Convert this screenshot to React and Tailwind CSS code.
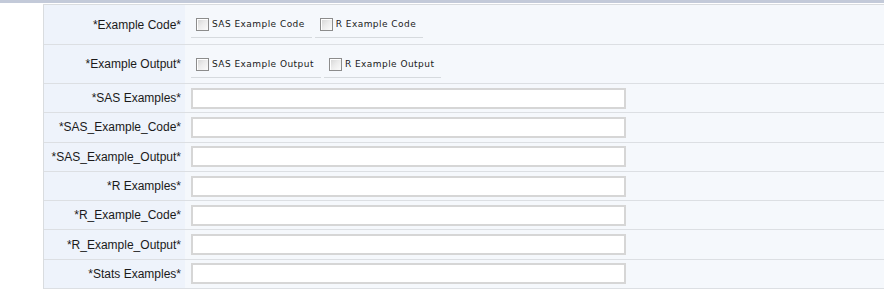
import React from 'react';

const checkRows = [
    { label: '*Example Code*', items: ['SAS Example Code', 'R Example Code'], h: 'h-[40px]' },
    { label: '*Example Output*', items: ['SAS Example Output', 'R Example Output'], h: 'h-[39px]' },
];

const textRows = [
    '*SAS Examples*',
    '*SAS_Example_Code*',
    '*SAS_Example_Output*',
    '*R Examples*',
    '*R_Example_Code*',
    '*R_Example_Output*',
    '*Stats Examples*',
];

function Box() {
    return (
        <span className="w-[13px] h-[13px] border border-[#8c8c8c] bg-gradient-to-br from-[#d4d4d4] via-[#ececec] to-[#fbfbfb] shrink-0 shadow-[inset_1px_1px_0_#fff]"></span>
    );
}

export default function App() {
    return (
        <div className="w-[884px] h-[289px] bg-white overflow-hidden font-['Liberation_Sans',Arial,sans-serif]">
            <div className="h-[3px] bg-[#c3cad9]"></div>
            <div className="h-px bg-white"></div>
            <div className="ml-[43px] border-l border-[#d9dcdf] border-t border-t-[#d9dcdf]">
                {checkRows.map(row => (
                    <div key={row.label} className={`flex ${row.h} border-b border-[#dcdfe3]`}>
                        <div className="w-[141px] shrink-0 bg-[#eef3fb] flex items-center justify-end pr-[4px] text-[12px] text-[#1a1a1a]">
                            {row.label}
                        </div>
                        <div className="flex-1 bg-[#f5f8fc] flex items-start pl-[6px] pt-[6px] gap-[3px]">
                            {row.items.map(item => (
                                <div key={item} className="flex items-center h-[27px] pl-[5px] pr-[7px] pt-[1px] border-b border-[#d6dade]">
                                    <Box />
                                    <span className="ml-[3px] text-[9px] tracking-[0.45px] text-[#1a1a1a] font-['DejaVu_Sans',Verdana,sans-serif]">{item}</span>
                                </div>
                            ))}
                        </div>
                    </div>
                ))}
                {textRows.map(label => (
                    <div key={label} className="flex h-[29.3px] border-b border-[#dcdfe3]">
                        <div className="w-[141px] shrink-0 bg-[#eef3fb] flex items-center justify-end pr-[4px] text-[12px] text-[#1a1a1a]">
                            {label}
                        </div>
                        <div className="flex-1 bg-[#f5f8fc] flex items-center pl-[6px]">
                            <input type="text" className="w-[435px] h-[21px] bg-white border-2 border-[#d6d6d6] outline-none" />
                        </div>
                    </div>
                ))}
            </div>
        </div>
    );
}
